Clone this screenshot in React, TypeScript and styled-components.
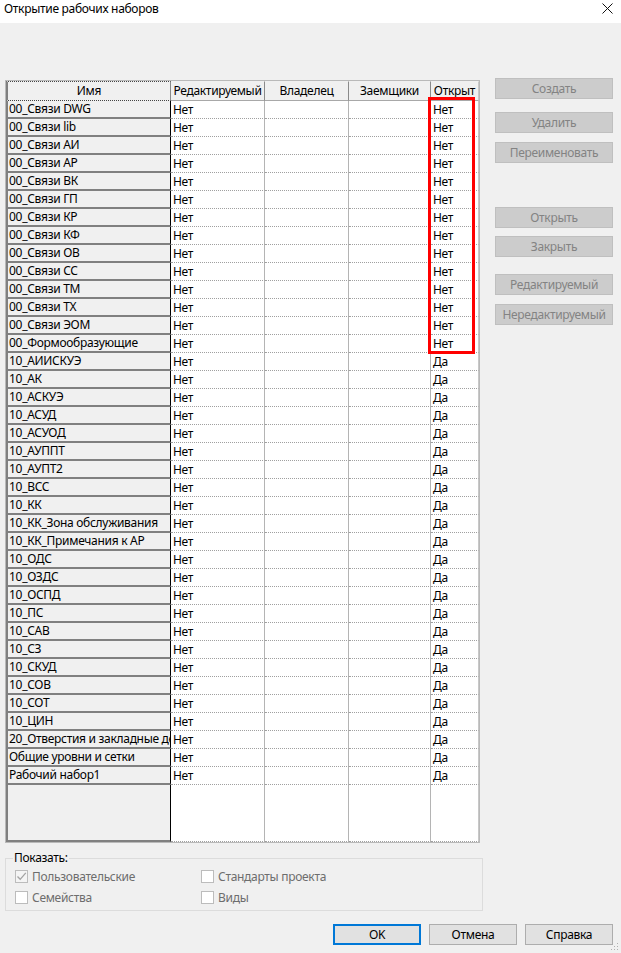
import React from "react";
import styled, { createGlobalStyle } from "styled-components";

type Workset = {
  name: string,
  editable: string,
  owner: string,
  borrowers: string,
  open: string,
};

const linkNames = [
  "00_Связи DWG", "00_Связи lib", "00_Связи АИ", "00_Связи АР", "00_Связи ВК",
  "00_Связи ГП", "00_Связи КР", "00_Связи КФ", "00_Связи ОВ", "00_Связи СС",
  "00_Связи ТМ", "00_Связи ТХ", "00_Связи ЭОМ", "00_Формообразующие",
];

const otherNames = [
  "10_АИИСКУЭ", "10_АК", "10_АСКУЭ", "10_АСУД", "10_АСУОД", "10_АУППТ", "10_АУПТ2",
  "10_ВСС", "10_КК", "10_КК_Зона обслуживания", "10_КК_Примечания к АР", "10_ОДС",
  "10_ОЗДС", "10_ОСПД", "10_ПС", "10_САВ", "10_СЗ", "10_СКУД", "10_СОВ", "10_СОТ",
  "10_ЦИН", "20_Отверстия и закладные детали", "Общие уровни и сетки", "Рабочий набор1",
];

const worksets: Array<Workset> = [
  ...linkNames.map((name) => ({ name, editable: "Нет", owner: "", borrowers: "", open: "Нет" })),
  ...otherNames.map((name) => ({ name, editable: "Нет", owner: "", borrowers: "", open: "Да" })),
];

const sideButtons = [
  { label: "Создать", space: 0 },
  { label: "Удалить", space: 13 },
  { label: "Переименовать", space: 9 },
  { label: "Открыть", space: 44 },
  { label: "Закрыть", space: 8 },
  { label: "Редактируемый", space: 17 },
  { label: "Нередактируемый", space: 9 },
];

const GlobalStyle = createGlobalStyle`
  body {
    margin: 0;
    background: #f0f0f0;
    font-family: "Noto Sans", "Open Sans", sans-serif;
    font-size: 12px;
    letter-spacing: -0.3px;
    color: #000;
  }
  * { box-sizing: border-box; }
`;

const App = () => {
  return (
    <Window>
      <GlobalStyle />
      <TitleBar>
        <Title>Открытие рабочих наборов</Title>
        <CloseButton aria-label="Закрыть">
          <svg width="11" height="11" viewBox="0 0 11 11">
            <path d="M0.5 0.5 L10.5 10.5 M10.5 0.5 L0.5 10.5" stroke="#111" strokeWidth="1" />
          </svg>
        </CloseButton>
      </TitleBar>

      <Body>
        <MainRow>
          <TableFrame>
            <Grid $rows={worksets.length}>
              <HeaderCell $focused>Имя</HeaderCell>
              <HeaderCell>Редактируемый</HeaderCell>
              <HeaderCell>Владелец</HeaderCell>
              <HeaderCell>Заемщики</HeaderCell>
              <HeaderCell $last>Открыт</HeaderCell>

              {worksets.map((ws, idx) => (
                <React.Fragment key={idx}>
                  <NameCell>{ws.name}</NameCell>
                  <DataCell>{ws.editable}</DataCell>
                  <DataCell>{ws.owner}</DataCell>
                  <DataCell>{ws.borrowers}</DataCell>
                  <DataCell $last>{ws.open}</DataCell>
                </React.Fragment>
              ))}

              <NameCell />
              <DataCell />
              <DataCell />
              <DataCell />
              <DataCell $last />
            </Grid>
            <Highlight />
          </TableFrame>

          <SideButtons>
            {sideButtons.map((b) => (
              <DisabledButton key={b.label} $space={b.space} disabled>
                {b.label}
              </DisabledButton>
            ))}
          </SideButtons>
        </MainRow>

        <ShowGroup>
          <Legend>Показать:</Legend>
          <CheckGrid>
            <CheckItem>
              <Box $checked>
                <svg width="11" height="11" viewBox="0 0 11 11">
                  <path d="M1.5 5.5 L4.2 8.3 L9.8 1.8" fill="none" stroke="#a3a3a3" strokeWidth="1.3" />
                </svg>
              </Box>
              Пользовательские
            </CheckItem>
            <CheckItem>
              <Box />
              Стандарты проекта
            </CheckItem>
            <CheckItem>
              <Box />
              Семейства
            </CheckItem>
            <CheckItem>
              <Box />
              Виды
            </CheckItem>
          </CheckGrid>
        </ShowGroup>

        <Footer>
          <DialogButton $default>OK</DialogButton>
          <DialogButton>Отмена</DialogButton>
          <DialogButton>Справка</DialogButton>
        </Footer>
      </Body>

      <Grip width="8" height="8" viewBox="0 0 8 8">
        <rect x="6" y="0" width="1" height="1" fill="#b0b0b0" />
        <rect x="3" y="3" width="1" height="1" fill="#b0b0b0" />
        <rect x="6" y="3" width="1" height="1" fill="#b0b0b0" />
        <rect x="0" y="6" width="1" height="1" fill="#b0b0b0" />
        <rect x="3" y="6" width="1" height="1" fill="#b0b0b0" />
        <rect x="6" y="6" width="1" height="1" fill="#b0b0b0" />
      </Grip>
    </Window>
  );
};

const Window = styled.div`
  position: relative;
  width: 621px;
  height: 953px;
  overflow: hidden;
  background: #f0f0f0;
`;

const TitleBar = styled.div`
  height: 23px;
  background: #fff;
  display: flex;
  align-items: flex-start;
  justify-content: space-between;
  padding: 1px 8px 0 4px;
`;

const Title = styled.span`
  line-height: 16px;
`;

const CloseButton = styled.div`
  margin-top: 2px;
  width: 11px;
  height: 11px;
  display: flex;
`;

const Body = styled.div`
  padding-top: 57px;
`;

const MainRow = styled.div`
  display: flex;
  align-items: flex-start;
  gap: 15px;
  padding-left: 5px;
`;

const TableFrame = styled.div`
  position: relative;
  width: 475px;
  height: 763px;
  border: 1px solid #b9b9b9;
  background: #fff;
`;

const Grid = styled.div<{ $rows: number }>`
  display: grid;
  height: 100%;
  grid-template-columns: 165px 94px 84px 82px 48px;
  grid-template-rows: 20px repeat(${(p) => p.$rows}, 18px) 1fr;
`;

const HeaderCell = styled.div<{ $focused?: boolean, $last?: boolean }>`
  background: #f0f0f0;
  text-align: center;
  line-height: 18px;
  white-space: nowrap;
  overflow: hidden;
  border-right: 1px solid ${(p) => (p.$last ? "#c8c8c8" : "#8a8a8a")};
  border-bottom: 1px ${(p) => (p.$focused ? "dotted #444" : "solid #a8a8a8")};
  border-top: 1px ${(p) => (p.$focused ? "dotted #444" : "solid #f0f0f0")};
  border-left: ${(p) => (p.$focused ? "2px solid #808080" : "none")};
  padding: 0 1px;
`;

const NameCell = styled.div`
  background: #f0f0f0;
  border-left: 2px solid #808080;
  border-bottom: 2px solid #808080;
  border-right: 1px solid #000;
  padding-left: 1px;
  line-height: 16px;
  white-space: nowrap;
  overflow: hidden;
`;

const DataCell = styled.div<{ $last?: boolean }>`
  background: #fff;
  border-bottom: 1px dotted #a0a0a0;
  border-right: 1px solid ${(p) => (p.$last ? "#c8c8c8" : "#b4b4b4")};
  padding-left: 2px;
  line-height: 17px;
  white-space: nowrap;
  overflow: hidden;
`;

const Highlight = styled.div`
  position: absolute;
  left: 422px;
  top: 16px;
  width: 47px;
  height: 257px;
  border: 3px solid #ff0000;
  pointer-events: none;
`;

const SideButtons = styled.div`
  display: flex;
  flex-direction: column;
  margin-top: -2px;
`;

const DisabledButton = styled.button<{ $space: number }>`
  width: 118px;
  height: 21px;
  margin: ${(p) => p.$space}px 0 0 0;
  padding: 0;
  background: #cccccc;
  border: 1px solid #bfbfbf;
  color: #838383;
  font: inherit;
  letter-spacing: inherit;
  line-height: 17px;
`;

const ShowGroup = styled.fieldset`
  margin: 7px 0 0 5px;
  width: 478px;
  height: 61px;
  padding: 0 0 0 9px;
  border: 1px solid #dcdcdc;
`;

const Legend = styled.legend`
  margin-left: -2px;
  padding: 0 1px;
  line-height: 16px;
`;

const CheckGrid = styled.div`
  display: grid;
  grid-template-columns: 186px auto;
  grid-auto-rows: 21px;
  grid-auto-flow: row;
`;

const CheckItem = styled.label`
  display: flex;
  align-items: center;
  gap: 4px;
  color: #6d6d6d;
  white-space: nowrap;
`;

const Box = styled.span<{ $checked?: boolean }>`
  width: 13px;
  height: 13px;
  border: 1px solid #bcbcbc;
  background: ${(p) => (p.$checked ? "#f4f4f4" : "#fff")};
  display: flex;
  align-items: center;
  justify-content: center;
`;

const Footer = styled.div`
  display: flex;
  justify-content: flex-end;
  gap: 8px;
  padding-right: 8px;
  margin-top: 13px;
`;

const DialogButton = styled.button<{ $default?: boolean }>`
  width: 88px;
  height: 21px;
  padding: 0;
  background: #e1e1e1;
  border: ${(p) => (p.$default ? "2px solid #0078d7" : "1px solid #adadad")};
  color: #000;
  font: inherit;
  letter-spacing: inherit;
  line-height: 17px;
`;

const Grip = styled.svg`
  position: absolute;
  right: 2px;
  bottom: 2px;
`;

export default App;
